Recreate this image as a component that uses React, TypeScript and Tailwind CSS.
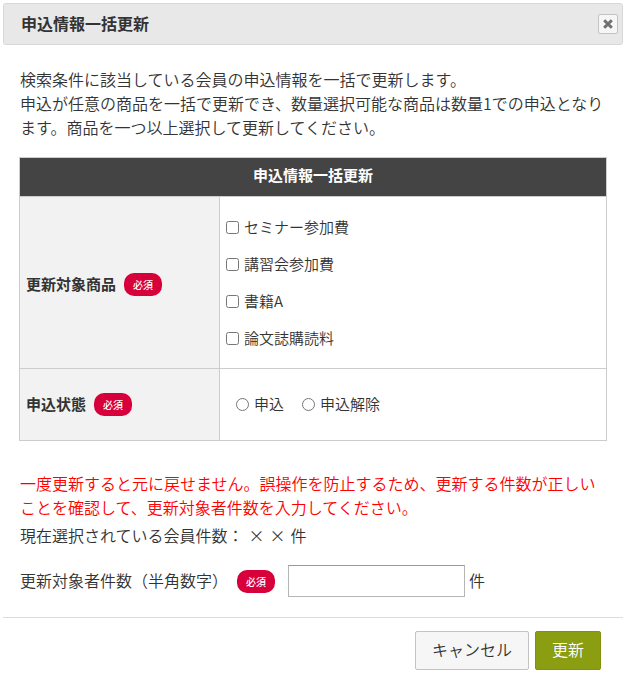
import { useState } from "react";

const products = ["セミナー参加費", "講習会参加費", "書籍A", "論文誌購読料"];
const statuses = ["申込", "申込解除"];

function Required() {
  return (
    <span className="inline-flex h-[23px] w-[38px] shrink-0 items-center justify-center rounded-[10px] bg-[#d7003a] text-[10px] font-medium text-white">
      必須
    </span>
  );
}

export default function App() {
  const [count, setCount] = useState("");

  return (
    <div className="py-[3px] pr-1 pl-[3px] font-['Noto_Sans_CJK_JP',sans-serif] text-base font-[350] text-[#333]">
      <header className="flex h-[42px] items-center justify-between rounded-[3px] border border-[#d8d8d8] bg-[#e8e8e8] pr-1 pl-[17px]">
        <h1 className="pb-[3px] font-bold">申込情報一括更新</h1>
        <button
          type="button"
          aria-label="閉じる"
          className="flex size-5 items-center justify-center rounded-[2px] border border-[#c3c3c3] bg-[#f6f6f6]"
        >
          <svg viewBox="0 0 10 10" className="size-[10px]" stroke="#707070" strokeWidth="3">
            <path d="M1.2 1.2L8.8 8.8M8.8 1.2L1.2 8.8" />
          </svg>
        </button>
      </header>

      <main className="pt-[22px] pr-4 pb-5 pl-4">
        <p className="mb-[18px] pl-px">
          検索条件に該当している会員の申込情報を一括で更新します。
          <br />
          申込が任意の商品を一括で更新でき、数量選択可能な商品は数量1での申込となります。商品を一つ以上選択して更新してください。
        </p>

        <table className="w-full table-fixed border-collapse border border-[#ccc] text-[15px]">
          <colgroup>
            <col className="w-[200px]" />
            <col />
          </colgroup>
          <thead>
            <tr className="h-[39px] bg-[#444] text-white">
              <th colSpan={2} className="border border-[#ccc] pb-[3px] font-bold">申込情報一括更新</th>
            </tr>
          </thead>
          <tbody>
            <tr className="h-[172px]">
              <th scope="row" className="border border-[#ccc] bg-[#f2f2f2] px-[6px] pt-[3px] text-left font-bold">
                <div className="flex items-center gap-2">
                  更新対象商品
                  <Required />
                </div>
              </th>
              <td className="border border-[#ccc] px-[6px]">
                {products.map((name) => (
                  <label key={name} className="flex h-[37px] items-center gap-[5px]">
                    <input type="checkbox" className="size-[13px]" />
                    {name}
                  </label>
                ))}
              </td>
            </tr>
            <tr className="h-[72px]">
              <th scope="row" className="border border-[#ccc] bg-[#f2f2f2] px-[6px] text-left font-bold">
                <div className="flex items-center gap-2">
                  申込状態
                  <Required />
                </div>
              </th>
              <td className="border border-[#ccc] px-4">
                <div className="flex gap-[18px]">
                  {statuses.map((name) => (
                    <label key={name} className="flex items-center gap-[5px]">
                      <input type="radio" name="status" className="size-[13px]" />
                      {name}
                    </label>
                  ))}
                </div>
              </td>
            </tr>
          </tbody>
        </table>

        <div className="mt-[30px] pl-px">
          <p className="text-[#f00]">
            一度更新すると元に戻せません。誤操作を防止するため、更新する件数が正しいことを確認して、更新対象者件数を入力してください。
          </p>
          <p className="mt-1 flex gap-[5px]">
            <span>現在選択されている会員件数：</span>
            <span>×</span>
            <span>×</span>
            <span>件</span>
          </p>
          <div className="mt-[18px] flex items-center">
            <label htmlFor="count" className="mr-[9px] pb-[3px]">更新対象者件数（半角数字）</label>
            <Required />
            <input
              id="count"
              type="text"
              value={count}
              onChange={(e) => setCount(e.target.value)}
              className="mr-1 ml-[13px] h-8 w-[177px] border border-[#b5b5b5] border-t-[#999] bg-white px-2"
            />
            <span className="pb-[3px]">件</span>
          </div>
        </div>
      </main>

      <footer className="flex justify-end gap-[6px] border-t border-[#ddd] pt-[13px] pr-[22px] pb-4">
        <button type="button" className="h-[39px] rounded-[2px] border border-[#c3c3c3] bg-[#f6f6f6] px-4 pb-[3px]">
          キャンセル
        </button>
        <button type="button" className="h-[39px] rounded-[2px] border border-[#81910f] bg-[#8b9d10] px-4 pb-[3px] text-white">
          更新
        </button>
      </footer>
    </div>
  );
}
